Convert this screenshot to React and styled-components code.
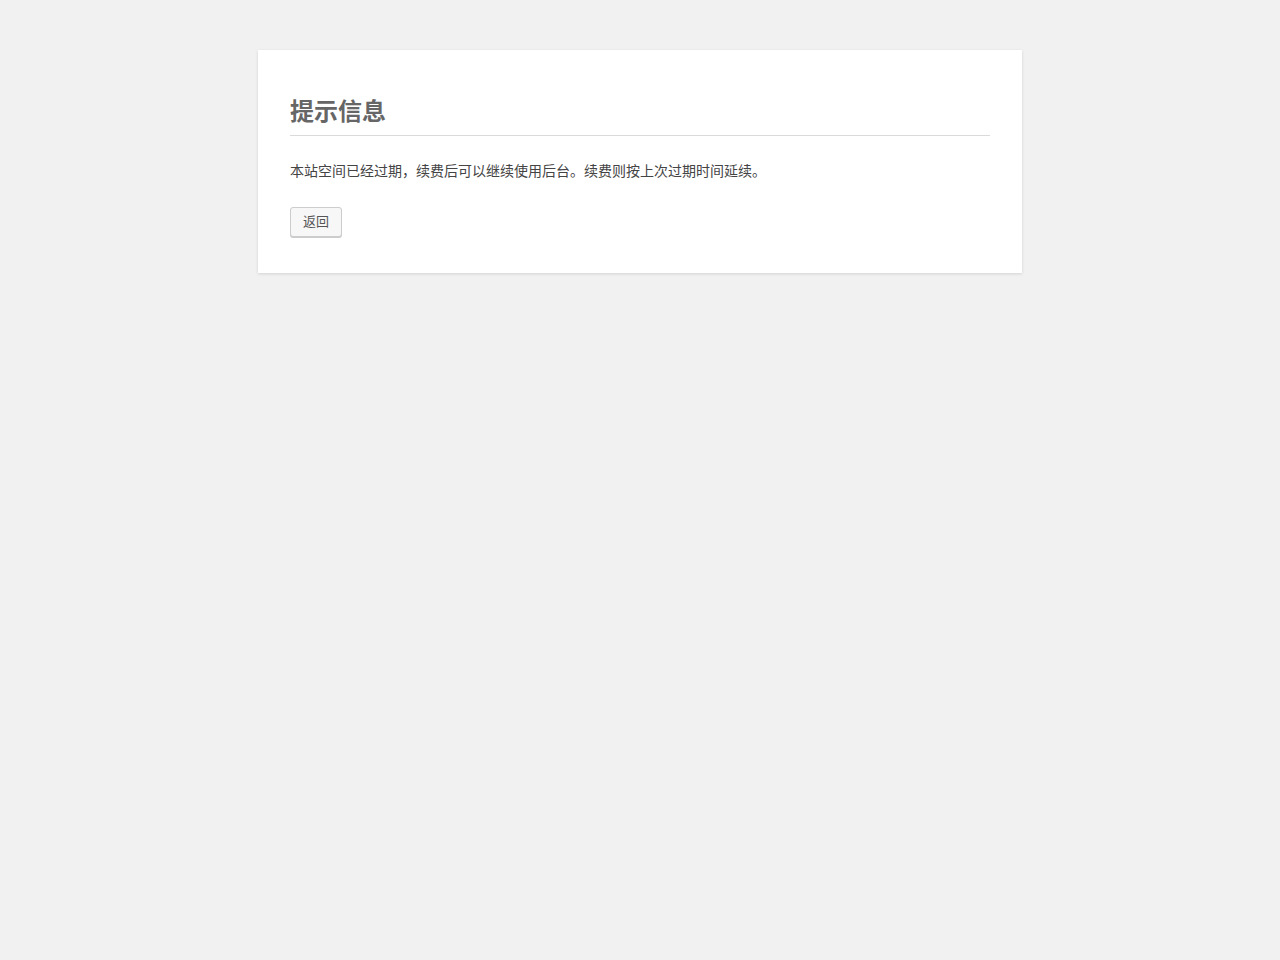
import React from "react";
import styled, { createGlobalStyle } from "styled-components";

const Global = createGlobalStyle`
  html { background: #f1f1f1; }
  body {
    margin: 0;
    background: #f1f1f1;
    font-family: "Liberation Sans", Arial, "Noto Sans CJK SC", sans-serif;
    font-size: 16px;
    color: #444;
  }
`;

const Page = styled.div`
  padding: 50px 0;
`;

const Card = styled.div`
  width: 700px;
  margin: 0 auto;
  padding: 16px 32px;
  background: #fff;
  box-shadow: 0 1px 3px rgba(0, 0, 0, 0.13);
`;

const Title = styled.h1`
  margin: 30px 0 0;
  padding: 0 0 7px;
  border-bottom: 1px solid #dadada;
  color: #666;
  font-size: 24px;
  line-height: 32px;
  font-weight: bold;
`;

const Text = styled.p`
  margin: 25px 0 20px;
  font-size: 14px;
  line-height: 21px;
`;

const ButtonRow = styled.div`
  margin: 25px 0 20px;
  display: flex;
`;

const Button = styled.button`
  height: 30px;
  padding: 0 12px 1px;
  border: 1px solid #ccc;
  border-radius: 3px;
  background: #f7f7f7;
  box-shadow: 0 1px 0 #ccc;
  color: #555;
  font-family: inherit;
  font-size: 13px;
  line-height: 26px;
  cursor: pointer;
`;

export default function App() {
  return (
    <>
      <Global />
      <Page>
        <Card>
          <Title>提示信息</Title>
          <Text>本站空间已经过期，续费后可以继续使用后台。续费则按上次过期时间延续。</Text>
          <ButtonRow>
            <Button>返回</Button>
          </ButtonRow>
        </Card>
      </Page>
    </>
  );
}
